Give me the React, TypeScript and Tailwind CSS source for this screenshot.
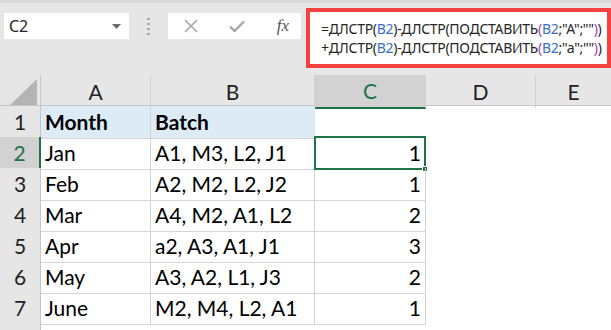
import React from 'react';

const rows = [
  { n: 2, month: 'Jan', batch: 'A1, M3, L2, J1', count: 1 },
  { n: 3, month: 'Feb', batch: 'A2, M2, L2, J2', count: 1 },
  { n: 4, month: 'Mar', batch: 'A4, M2, A1, L2', count: 2 },
  { n: 5, month: 'Apr', batch: 'a2, A3, A1, J1', count: 3 },
  { n: 6, month: 'May', batch: 'A3, A2, L1, J3', count: 2 },
  { n: 7, month: 'June', batch: 'M2, M4, L2, A1', count: 1 },
];

const cellFont = { fontFamily: 'Lato, "Liberation Sans", sans-serif' };
const uiFont = { fontFamily: '"Noto Sans", "Open Sans", sans-serif' };

function Ref({ children }: { children: React.ReactNode }) {
  return <span className="text-[#3a6fc4]">{children}</span>;
}

function P({ children }: { children: React.ReactNode }) {
  return <span className="text-[#a03fb5]">{children}</span>;
}

function FormulaBar() {
  return (
    <div className="flex h-full items-start">
      {/* name box */}
      <div className="mt-[10px] ml-[4px] flex h-[26px] w-[125px] shrink-0 items-center justify-between bg-white pl-[5px] pr-[8px]">
        <span className="text-[16px] text-[#262626]" style={uiFont}>C2</span>
        <svg width="9" height="5" viewBox="0 0 9 5"><path d="M0 0h9L4.5 5z" fill="#6b6b6b" /></svg>
      </div>
      {/* grip dots */}
      <div className="mt-[15px] flex w-[39px] shrink-0 flex-col items-center gap-[3px]">
        <div className="h-[2px] w-[3px] bg-[#a8a8a8]" />
        <div className="h-[2px] w-[3px] bg-[#a8a8a8]" />
        <div className="h-[2px] w-[3px] bg-[#a8a8a8]" />
        <div className="h-[2px] w-[3px] bg-[#a8a8a8]" />
      </div>
      {/* buttons */}
      <div className="mt-[10px] flex h-[26px] w-[133px] shrink-0 items-center bg-white">
        <div className="flex w-[44px] justify-center pl-[2px]">
          <svg width="14" height="14" viewBox="0 0 14 14"><path d="M1 1l12 12M13 1L1 13" stroke="#a6a6a6" strokeWidth="1.6" /></svg>
        </div>
        <div className="flex w-[44px] justify-center pl-[6px]">
          <svg width="16" height="12" viewBox="0 0 16 12"><path d="M1 6.5l4.5 4.5L15 1.5" stroke="#a6a6a6" strokeWidth="2.4" fill="none" /></svg>
        </div>
        <div className="flex w-[44px] justify-center pl-[10px]">
          <span className="text-[17px] italic text-[#555]" style={{ fontFamily: '"Liberation Serif", serif' }}>fx</span>
        </div>
      </div>
      {/* formula */}
      <div className="mt-[5px] ml-[5px] flex h-[60px] min-w-0 flex-1 flex-col justify-center overflow-hidden border-[4px] border-[#f54040] bg-white pl-[11px] text-[14px] leading-[19px] tracking-[-0.3px] text-[#262626]" style={uiFont}>
        <div className="whitespace-nowrap">
          =ДЛСТР(<Ref>B2</Ref>)-ДЛСТР(ПОДСТАВИТЬ<P>(</P><Ref>B2</Ref>;"A";""<P>)</P>)
        </div>
        <div className="whitespace-nowrap">
          +ДЛСТР(<Ref>B2</Ref>)-ДЛСТР(ПОДСТАВИТЬ<P>(</P><Ref>B2</Ref>;"a";""<P>)</P>)
        </div>
      </div>
    </div>
  );
}

const grid = 'grid grid-cols-[41px_110px_164px_111px_110px_1fr]';

export default function App() {
  return (
    <div className="h-[330px] w-[611px] overflow-hidden bg-white" style={cellFont}>
      <div className="h-[75px] border-t-[3px] border-[#d8d8d8] bg-[#e6e6e6]">
        <FormulaBar />
      </div>

      {/* column headers */}
      <div className={`${grid} h-[31px] border-b border-[#c6c6c6] bg-[#e6e6e6] text-[21px] text-[#222]`}>
        <div className="relative border-r border-[#c6c6c6]">
          <svg className="absolute right-[3px] bottom-[3px]" width="27" height="26" viewBox="0 0 27 26"><path d="M27 0V26H0z" fill="#b4b4b4" /></svg>
        </div>
        <div className="flex items-center justify-center border-r border-[#d0d0d0]">A</div>
        <div className="flex items-center justify-center border-r border-[#d0d0d0]">B</div>
        <div className="-mb-px flex items-center justify-center border-r border-b-2 border-r-[#d0d0d0] border-b-[#217346] bg-[#d2d2d2] text-[#217346]">C</div>
        <div className="flex items-center justify-center border-r border-[#d0d0d0]">D</div>
        <div className="flex items-center justify-center">E</div>
      </div>

      {/* row 1 */}
      <div className={`${grid} h-[31px] text-[21px] text-black`}>
        <div className="flex items-center justify-center border-r border-b border-[#c6c6c6] bg-[#e6e6e6] text-[21px] text-[#222]">1</div>
        <div className="flex items-center border-r border-b border-[#d4d4d4] bg-[#ddebf7] pl-[4px] font-bold">Month</div>
        <div className="flex items-center border-b border-[#d4d4d4] bg-[#ddebf7] pl-[4px] font-bold">Batch</div>
        <div />
        <div />
        <div />
      </div>

      {rows.map((r) => {
        const sel = r.n === 2;
        return (
          <div key={r.n} className={`${grid} h-[31px] text-[21px] text-black`}>
            <div
              className={
                sel
                  ? 'flex items-center justify-center border-r-2 border-b border-r-[#217346] border-b-[#c6c6c6] bg-[#d2d2d2] text-[21px] text-[#217346]'
                  : 'flex items-center justify-center border-r border-b border-[#c6c6c6] bg-[#e6e6e6] text-[21px] text-[#222]'
              }
            >
              {r.n}
            </div>
            <div className="flex items-center border-r border-b border-[#d4d4d4] pl-[4px]">{r.month}</div>
            <div className="flex items-center border-r border-b border-[#d4d4d4] pl-[4px]">{r.batch}</div>
            <div className="relative flex items-center justify-end border-r border-b border-[#d4d4d4] pr-[4px]">
              {r.count}
              {sel ? (
                <div className="absolute -top-[1px] -left-[1px] -right-[1px] -bottom-[1px] border-2 border-[#217346]">
                  <div className="absolute -right-[4px] -bottom-[4px] h-[6px] w-[6px] border border-white bg-[#217346]" />
                </div>
              ) : null}
            </div>
            <div />
            <div />
          </div>
        );
      })}

      <div className={`${grid} h-[31px]`}>
        <div className="border-r border-[#c6c6c6] bg-[#e6e6e6]" />
      </div>
    </div>
  );
}
